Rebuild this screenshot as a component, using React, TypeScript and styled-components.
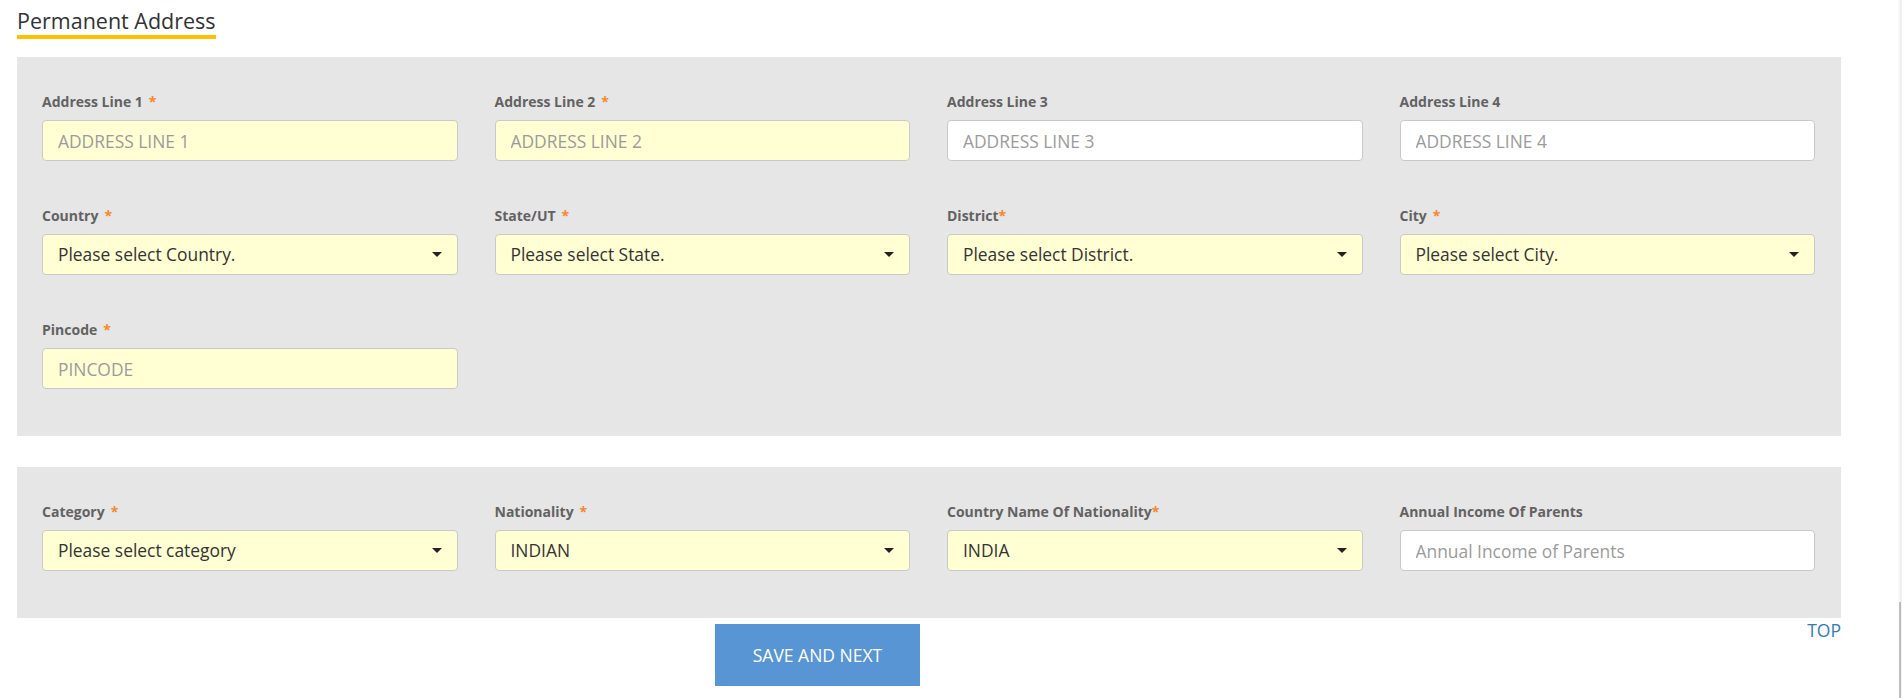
import styled, { createGlobalStyle } from "styled-components"

const GlobalStyle = createGlobalStyle`
  html, body {
    margin: 0;
    padding: 0;
    background: #fff;
  }
  body {
    font-family: "Open Sans", "Liberation Sans", Arial, sans-serif;
    font-size: 16px;
    line-height: 1.4;
    color: #333;
  }
  * { box-sizing: border-box; }
`

const Page = styled.div`
  width: 1824px;
  margin-left: 17px;
  padding-top: 10px;
`

const HeadingRow = styled.div`
  display: flex;
`

const Heading = styled.h3`
  margin: 0;
  font-size: 21.5px;
  line-height: 22px;
  font-weight: 400;
  color: #333;
  padding-bottom: 3px;
  border-bottom: 4px solid #ffc000;
`

const Panel = styled.section<{ $top: number }>`
  margin-top: ${(p) => p.$top}px;
  background: #e6e6e6;
  padding: 35px 26px 47px 25px;
`

const FieldGrid = styled.div`
  display: grid;
  grid-template-columns: repeat(4, 1fr);
  column-gap: 37px;
  row-gap: 45px;
`

const Field = styled.div`
  display: flex;
  flex-direction: column;
  gap: 8px;
`

const Label = styled.label`
  font-size: 14px;
  line-height: 20px;
  font-weight: 700;
  color: #626262;
`

const Star = styled.span<{ $tight?: boolean }>`
  color: #f7862c;
  margin-left: ${(p) => (p.$tight ? 0 : 6)}px;
`

const TextInput = styled.input<{ $required?: boolean }>`
  width: 100%;
  height: 41px;
  padding: 0 15px;
  border: 1px solid #c9c9c9;
  border-radius: 4px;
  background: ${(p) => (p.$required ? "#ffffd3" : "#fff")};
  font-family: inherit;
  font-size: 17.4px;
  color: #333;
  outline: none;
  &::placeholder {
    color: #9b9b9b;
  }
`

const SelectBox = styled.div`
  height: 41px;
  display: flex;
  align-items: center;
  justify-content: space-between;
  padding: 0 15px;
  border: 1px solid #c9c9c9;
  border-radius: 4px;
  background: #ffffd3;
  font-size: 17.4px;
  color: #333;
`

const Caret = styled.span`
  width: 0;
  height: 0;
  border-left: 5px solid transparent;
  border-right: 5px solid transparent;
  border-top: 5px solid #222;
`

const Footer = styled.div`
  display: flex;
  justify-content: space-between;
  align-items: flex-start;
`

const SaveButton = styled.button`
  margin: 6px 0 0 698px;
  width: 205px;
  height: 62px;
  border: none;
  background: #5895d5;
  color: #fff;
  font-family: inherit;
  font-size: 17.5px;
  text-transform: uppercase;
  cursor: pointer;
`

const TopLink = styled.a`
  font-size: 17.5px;
  line-height: 24px;
  color: #337ab7;
  text-decoration: none;
`

const ScrollTrack = styled.div`
  position: fixed;
  top: 0;
  right: 0;
  bottom: 0;
  width: 3px;
  background: #f0f0f0;
`

const ScrollThumb = styled.div`
  position: absolute;
  top: 602px;
  bottom: 0;
  left: 0;
  width: 2px;
  background: #bdbdbd;
`

type FieldDef =
  | { kind: "input"; label: string; placeholder: string; required?: boolean; tight?: boolean }
  | { kind: "select"; label: string; value: string; tight?: boolean }

const addressFields: FieldDef[] = [
  { kind: "input", label: "Address Line 1", placeholder: "ADDRESS LINE 1", required: true },
  { kind: "input", label: "Address Line 2", placeholder: "ADDRESS LINE 2", required: true },
  { kind: "input", label: "Address Line 3", placeholder: "ADDRESS LINE 3" },
  { kind: "input", label: "Address Line 4", placeholder: "ADDRESS LINE 4" },
  { kind: "select", label: "Country", value: "Please select Country." },
  { kind: "select", label: "State/UT", value: "Please select State." },
  { kind: "select", label: "District", value: "Please select District.", tight: true },
  { kind: "select", label: "City", value: "Please select City." },
  { kind: "input", label: "Pincode", placeholder: "PINCODE", required: true },
]

const otherFields: FieldDef[] = [
  { kind: "select", label: "Category", value: "Please select category" },
  { kind: "select", label: "Nationality", value: "INDIAN" },
  { kind: "select", label: "Country Name Of Nationality", value: "INDIA", tight: true },
  { kind: "input", label: "Annual Income Of Parents", placeholder: "Annual Income of Parents" },
]

function FormField({ def }: { def: FieldDef }) {
  const required = def.kind === "select" || def.required
  return (
    <Field>
      <Label>
        {def.label}
        {required && <Star $tight={def.tight}>*</Star>}
      </Label>
      {def.kind === "input" ? (
        <TextInput $required={def.required} placeholder={def.placeholder} />
      ) : (
        <SelectBox>
          <span>{def.value}</span>
          <Caret />
        </SelectBox>
      )}
    </Field>
  )
}

export default function App() {
  return (
    <>
      <GlobalStyle />
      <Page>
        <HeadingRow>
          <Heading>Permanent Address</Heading>
        </HeadingRow>

        <Panel $top={18}>
          <FieldGrid>
            {addressFields.map((f) => (
              <FormField key={f.label} def={f} />
            ))}
          </FieldGrid>
        </Panel>

        <Panel $top={31}>
          <FieldGrid>
            {otherFields.map((f) => (
              <FormField key={f.label} def={f} />
            ))}
          </FieldGrid>
        </Panel>

        <Footer>
          <SaveButton>Save and Next</SaveButton>
          <TopLink href="#">TOP</TopLink>
        </Footer>
      </Page>
      <ScrollTrack>
        <ScrollThumb />
      </ScrollTrack>
    </>
  )
}
